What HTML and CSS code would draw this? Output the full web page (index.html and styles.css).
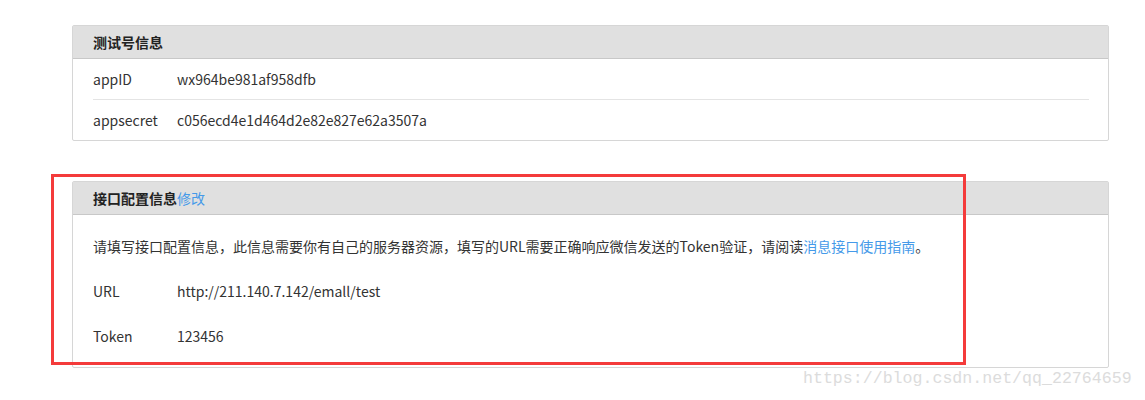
FILE: index.html
```html
<!DOCTYPE html>
<html lang="zh-CN">
<head>
    <meta charset="UTF-8">
    <title>测试号管理</title>
    <link rel="stylesheet" href="styles.css">
</head>
<body>
    <div class="page">
        <div class="panel">
            <div class="panel-head">测试号信息</div>
            <div class="panel-body list">
                <div class="row"><span class="label">appID</span><span>wx964be981af958dfb</span></div>
                <div class="row"><span class="label">appsecret</span><span>c056ecd4e1d464d2e82e827e62a3507a</span></div>
            </div>
        </div>

        <div class="panel config">
            <div class="panel-head">接口配置信息<a href="#">修改</a></div>
            <div class="panel-body">
                <p>请填写接口配置信息，此信息需要你有自己的服务器资源，填写的URL需要正确响应微信发送的Token验证，请阅读<a href="#">消息接口使用指南</a>。</p>
                <div class="line"><span class="label">URL</span><span>http://211.140.7.142/emall/test</span></div>
                <div class="line"><span class="label">Token</span><span>123456</span></div>
            </div>
            <div class="mark"></div>
        </div>
    </div>
    <div class="watermark">https://blog.csdn.net/qq_22764659</div>
</body>
</html>
```

FILE: styles.css
```css
body {
    margin: 0;
    font-family: "Noto Sans CJK SC", "Noto Sans", sans-serif;
    font-size: 14px;
    color: #333;
    background: #fff;
}
.page {
    width: 1037px;
    margin-left: 72px;
    padding-top: 25px;
}
.panel {
    border: 1px solid #d6d6d6;
    border-radius: 2px;
    position: relative;
}
.panel + .panel {
    margin-top: 40px;
}
.panel-head {
    background: #e0e0e0;
    border-bottom: 1px solid #c8c8c8;
    height: 32px;
    line-height: 32px;
    padding: 0 20px;
    font-weight: bold;
    color: #222;
}
.panel-head a {
    font-weight: normal;
    color: #459ae9;
    text-decoration: none;
}
.panel-body {
    padding: 0 19px 0 20px;
}
.list .row {
    display: flex;
    height: 40px;
    line-height: 40px;
}
.list .row + .row {
    border-top: 1px solid #e4e4e4;
}
.label {
    width: 84px;
    flex-shrink: 0;
}
.config .panel-body {
    padding-top: 9px;
    padding-bottom: 8px;
}
.config p {
    margin: 0;
    line-height: 45px;
}
.config p a {
    color: #459ae9;
    text-decoration: none;
}
.line {
    display: flex;
    line-height: 45px;
}
.mark {
    position: absolute;
    left: -22px;
    top: -8px;
    width: 909px;
    height: 185px;
    border: 3px solid #f43b3b;
}
.watermark {
    position: absolute;
    left: 803px;
    top: 369px;
    font-family: "Liberation Mono", monospace;
    font-size: 16.6px;
    color: #dcdcdc;
}
```
